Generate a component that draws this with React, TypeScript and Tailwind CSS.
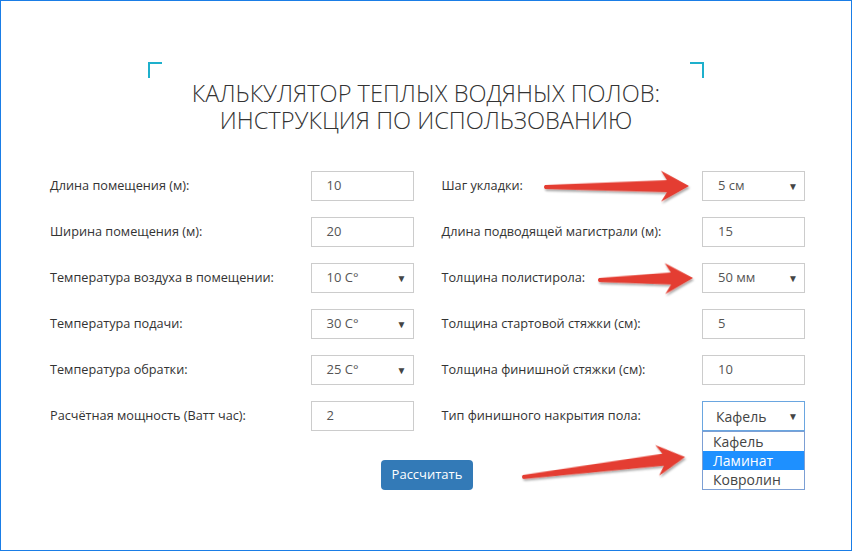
import React from "react";

type Field = { label: string; value: string; select?: boolean };

const left: Field[] = [
  { label: "Длина помещения (м):", value: "10" },
  { label: "Ширина помещения (м):", value: "20" },
  { label: "Температура воздуха в помещении:", value: "10 C°", select: true },
  { label: "Температура подачи:", value: "30 C°", select: true },
  { label: "Температура обратки:", value: "25 C°", select: true },
  { label: "Расчётная мощность (Ватт час):", value: "2" },
];

const right: Field[] = [
  { label: "Шаг укладки:", value: "5 см", select: true },
  { label: "Длина подводящей магистрали (м):", value: "15" },
  { label: "Толщина полистирола:", value: "50 мм", select: true },
  { label: "Толщина стартовой стяжки (см):", value: "5" },
  { label: "Толщина финишной стяжки (см):", value: "10" },
];

// tail -> tip, drawn in a local frame then rotated
const arrows = [
  { x1: 545, y1: 187, x2: 689, y2: 186 },
  { x1: 599, y1: 280, x2: 693, y2: 278 },
  { x1: 523, y1: 477, x2: 685, y2: 457 },
];

function arrowPath(L: number) {
  const H = 24;
  const W = 15.5;
  return `M0,-2 L${L - H + 2},-6 L${L - H - 4},-${W} L${L},0 L${L - H - 4},${W} L${L - H + 2},6 L0,2 Q-2,0 0,-2 Z`;
}

function Box({ field }: { field: Field }) {
  return (
    <div className="flex h-[30px] w-[103px] shrink-0 items-center justify-between border border-[#cccccc] bg-white pl-[15px] pr-[6px] text-[13px] text-[#555]">
      <span>{field.value}</span>
      {field.select && <span className="text-[10px] text-[#444]">▼</span>}
    </div>
  );
}

function Row({ field }: { field: Field }) {
  return (
    <div className="flex h-[30px] items-center justify-between">
      <span className="text-[12.7px] text-[#333]">{field.label}</span>
      <Box field={field} />
    </div>
  );
}

export default function App() {
  return (
    <div className="relative h-[551px] w-[852px] overflow-hidden border border-[#1a7de6] bg-white font-['Open_Sans',sans-serif]">
      {/* heading with corner ticks */}
      <div className="mx-auto mt-[61px] w-[556px]">
        <div className="flex justify-between">
          <div className="h-[16px] w-[14px] border-l-2 border-t-2 border-[#1eb0cc]" />
          <div className="h-[16px] w-[14px] border-r-2 border-t-2 border-[#1eb0cc]" />
        </div>
        <h1 className="mt-[2px] text-center text-[23.6px] font-light uppercase leading-[27px] text-[#333]">
          <span className="block">Калькулятор теплых водяных полов:</span>
          <span className="block">инструкция по использованию</span>
        </h1>
      </div>

      {/* form */}
      <div className="ml-[49px] mt-[37px] grid w-[755px] grid-cols-2 gap-x-[28px]">
        <div className="flex flex-col gap-[16px]">
          {left.map((f) => (
            <Row key={f.label} field={f} />
          ))}
        </div>
        <div className="flex flex-col gap-[16px]">
          {right.map((f) => (
            <Row key={f.label} field={f} />
          ))}
          <div className="flex h-[30px] items-center justify-between">
            <span className="text-[12.7px] text-[#333]">Тип финишного накрытия пола:</span>
            <div className="relative">
              <div className="flex h-[30px] w-[103px] items-center justify-between border border-[#6aa6e0] bg-white pl-[13px] pr-[6px] text-[14px] text-[#444]">
                <span>Кафель</span>
                <span className="text-[10px] text-[#444]">▼</span>
              </div>
              <ul className="absolute left-0 top-[30px] w-[103px] border border-[#7c9fd4] bg-white text-[14px] leading-[19px] text-[#444]">
                <li className="pl-[10px]">Кафель</li>
                <li className="bg-[#1e90ff] pl-[10px] text-white">Ламинат</li>
                <li className="pl-[10px]">Ковролин</li>
              </ul>
            </div>
          </div>
        </div>
      </div>

      <div className="mt-[29px] flex justify-center pl-[2px]">
        <button className="h-[30px] w-[92px] rounded-[4px] bg-[#337ab7] text-[13px] text-white">
          Рассчитать
        </button>
      </div>

      {/* annotation arrows */}
      <svg className="pointer-events-none absolute left-0 top-0" width="852" height="551">
        <defs>
          <filter id="sh" x="-20%" y="-50%" width="140%" height="200%">
            <feDropShadow dx="1" dy="2" stdDeviation="1.2" floodColor="#000" floodOpacity="0.35" />
          </filter>
        </defs>
        {arrows.map((a, i) => {
          const dx = a.x2 - a.x1;
          const dy = a.y2 - a.y1;
          const L = Math.hypot(dx, dy);
          const deg = (Math.atan2(dy, dx) * 180) / Math.PI;
          return (
            <path
              key={i}
              d={arrowPath(L)}
              transform={`translate(${a.x1 - 1} ${a.y1 - 1}) rotate(${deg})`}
              fill="#e43c30"
              filter="url(#sh)"
            />
          );
        })}
      </svg>
    </div>
  );
}
